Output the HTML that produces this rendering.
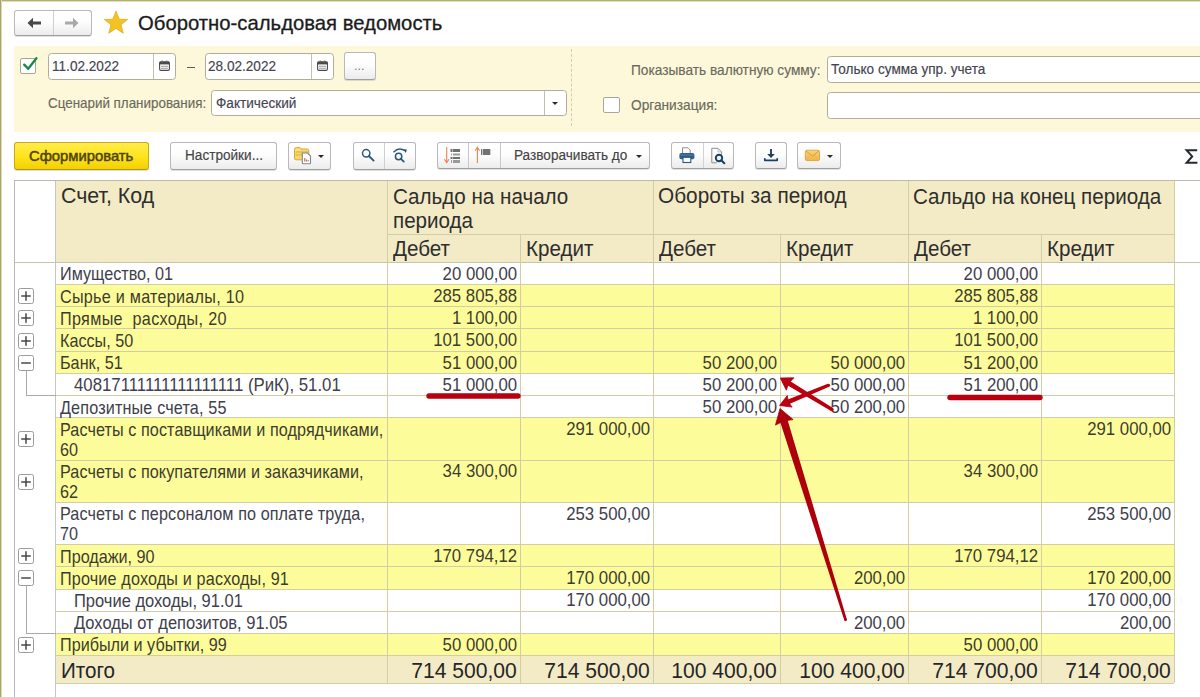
<!DOCTYPE html>
<html><head><meta charset="utf-8">
<style>
*{margin:0;padding:0;box-sizing:border-box}
html,body{width:1200px;height:697px;overflow:hidden;background:#fff}
body{position:relative;font-family:"Liberation Sans",sans-serif;color:#333}
.a{position:absolute}
.t{position:absolute;white-space:nowrap;line-height:1}
.btn{position:absolute;border:1px solid #b9b9b9;border-bottom-color:#9f9f9f;border-radius:3px;background:linear-gradient(#ffffff,#fdfdfd 45%,#ececec);box-shadow:0 1px 0 rgba(0,0,0,.12)}
.fld{position:absolute;background:#fff;border:1px solid #b1ad9c;border-radius:3.5px}
.vd{position:absolute;width:1px;background:#c4c4c4}
.tri{position:absolute;width:0;height:0;border-left:3px solid transparent;border-right:3px solid transparent;border-top:3px solid #2a2a2a}
</style></head><body>
<!-- window frame -->
<div class="a" style="left:0;top:0;width:1200px;height:1px;background:#b3ae74"></div><div class="a" style="left:0;top:1px;width:1200px;height:1px;background:#e2dfbd"></div>
<div class="a" style="left:0;top:0;width:1px;height:697px;background:#a9a46c"></div><div class="a" style="left:1px;top:0;width:1px;height:697px;background:#dcd9b4"></div>

<!-- nav buttons -->
<div class="btn" style="left:14px;top:10px;width:78px;height:26px"></div>
<div class="vd" style="left:53px;top:11px;height:24px;background:#cfcfcf"></div>
<svg class="a" style="left:26px;top:16px" width="16" height="14" viewBox="0 0 16 14"><path d="M1.5 7 L7 1.8 L7 5.4 L15 5.4 L15 8.6 L7 8.6 L7 12.2 Z" fill="#474747"/></svg>
<svg class="a" style="left:64px;top:16px" width="16" height="14" viewBox="0 0 16 14"><path d="M14.5 7 L9 1.8 L9 5.4 L1 5.4 L1 8.6 L9 8.6 L9 12.2 Z" fill="#a9a9a9"/></svg>

<!-- star -->
<svg class="a" style="left:103px;top:10px" width="26" height="25" viewBox="0 0 26 25"><path d="M13 1.2 L16.2 9.2 L24.6 9.5 L18 14.8 L20.3 23.2 L13 18.4 L5.7 23.2 L8 14.8 L1.4 9.5 L9.8 9.2 Z" fill="#f5c226" stroke="#e1ab18" stroke-width="0.8" stroke-linejoin="round"/></svg>
<div class="t" style="left:138px;top:13px;font-size:20.3px;color:#1b1b1b;-webkit-text-stroke:0.3px #1b1b1b">Оборотно-сальдовая ведомость</div>

<!-- yellow panel -->
<div class="a" style="left:14px;top:46px;width:1186px;height:86px;background:#fef8da"></div>


<!-- panel contents -->
<div class="a" style="left:20px;top:58px;width:16px;height:16px;border:1px solid #aaa59a;border-radius:2px;background:#fff"></div>
<svg class="a" style="left:20px;top:55px" width="20" height="18" viewBox="0 0 20 18"><path d="M4.2 9.6 L8.2 13.8 L16.4 3.2" fill="none" stroke="#168a46" stroke-width="2.3" stroke-linecap="round" stroke-linejoin="round"/></svg>

<div class="fld" style="left:48px;top:53px;width:128px;height:27px"></div>
<div class="vd" style="left:153px;top:54px;height:25px;background:#c4c0b0"></div>
<div class="t" style="left:52px;top:60px;font-size:13.6px;color:#444450;transform:scaleY(1.12);transform-origin:0 11.5px;-webkit-text-stroke:0.15px currentColor">11.02.2022</div>
<svg class="a" style="left:159px;top:60px" width="11" height="11" viewBox="0 0 11 11"><rect x="0.6" y="1.8" width="9.8" height="8.6" rx="1.3" fill="#fff" stroke="#4a4a4a" stroke-width="1.1"/><rect x="0.6" y="1.8" width="9.8" height="2.6" fill="#4a4a4a"/><path d="M2 6.3h7M2 8.3h7" stroke="#9a9a9a" stroke-width="1.1"/><path d="M3.2 0.6v2M7.8 0.6v2" stroke="#6a6a6a" stroke-width="1.2"/></svg>

<div class="a" style="left:187px;top:67px;width:8px;height:1px;background:#5a5a5a"></div>

<div class="fld" style="left:205px;top:53px;width:129px;height:27px"></div>
<div class="vd" style="left:311px;top:54px;height:25px;background:#c4c0b0"></div>
<div class="t" style="left:208px;top:60px;font-size:13.6px;color:#444450;transform:scaleY(1.12);transform-origin:0 11.5px;-webkit-text-stroke:0.15px currentColor">28.02.2022</div>
<svg class="a" style="left:317px;top:60px" width="11" height="11" viewBox="0 0 11 11"><rect x="0.6" y="1.8" width="9.8" height="8.6" rx="1.3" fill="#fff" stroke="#4a4a4a" stroke-width="1.1"/><rect x="0.6" y="1.8" width="9.8" height="2.6" fill="#4a4a4a"/><path d="M2 6.3h7M2 8.3h7" stroke="#9a9a9a" stroke-width="1.1"/><path d="M3.2 0.6v2M7.8 0.6v2" stroke="#6a6a6a" stroke-width="1.2"/></svg>

<div class="btn" style="left:344px;top:52px;width:32px;height:28px"></div>
<div class="t" style="left:354px;top:60px;font-size:12.5px;color:#777">...</div>

<div class="t" style="left:48px;top:97px;font-size:13.4px;color:#6a6a5c;transform:scaleY(1.12);transform-origin:0 11.3px;-webkit-text-stroke:0.15px currentColor">Сценарий планирования:</div>
<div class="fld" style="left:211px;top:90px;width:356px;height:26px"></div>
<div class="vd" style="left:544px;top:91px;height:24px;background:#c4c0b0"></div>
<div class="t" style="left:216px;top:97px;font-size:13.6px;color:#444450;transform:scaleY(1.12);transform-origin:0 11.5px;-webkit-text-stroke:0.15px currentColor">Фактический</div>
<div class="tri" style="left:552px;top:102px;"></div>

<div class="a" style="left:571px;top:49px;width:0;height:77px;border-left:1px dashed #d2ccb4"></div>

<div class="t" style="left:631px;top:64px;font-size:13.7px;color:#6a6a5c;transform:scaleY(1.12);transform-origin:0 11.6px;-webkit-text-stroke:0.15px currentColor">Показывать валютную сумму:</div>
<div class="fld" style="left:827px;top:56px;width:400px;height:27px"></div>
<div class="t" style="left:831px;top:63px;font-size:13.6px;color:#444450;transform:scaleY(1.12);transform-origin:0 11.5px;-webkit-text-stroke:0.15px currentColor">Только сумма упр. учета</div>

<div class="a" style="left:603px;top:97px;width:17px;height:16px;border:1px solid #aaa59a;border-radius:2px;background:#fff"></div>
<div class="t" style="left:631px;top:99px;font-size:13.7px;color:#6a6a5c;transform:scaleY(1.12);transform-origin:0 11.6px;-webkit-text-stroke:0.15px currentColor">Организация:</div>
<div class="fld" style="left:827px;top:92px;width:400px;height:27px"></div>

<!-- toolbar -->
<div class="a" style="left:14px;top:142px;width:135px;height:28px;border:1px solid #c8ab12;border-bottom-color:#b09510;border-radius:3px;background:linear-gradient(#ffec4d,#fde51f 50%,#f4d000);box-shadow:0 1px 0 rgba(0,0,0,.12)"></div>
<div class="t" style="left:29px;top:149px;font-size:14.8px;color:#4e4310;-webkit-text-stroke:0.5px #4e4310">Сформировать</div>

<div class="btn" style="left:170px;top:142px;width:107px;height:28px"></div>
<div class="t" style="left:185px;top:149px;font-size:13.6px;color:#444;transform:scaleY(1.12);transform-origin:0 11.5px;-webkit-text-stroke:0.15px currentColor">Настройки...</div>

<div class="btn" style="left:288px;top:142px;width:43px;height:28px"></div>
<svg class="a" style="left:293px;top:146px" width="20" height="20" viewBox="0 0 20 20">
<path d="M1.5 3.5 Q1.5 1.5 3.5 1.5 H6 Q7.5 1.5 8 3 H14.5 Q15.8 3 15.8 4.5 V12.5 Q15.8 13.8 14.5 13.8 H3 Q1.5 13.8 1.5 12.3 Z" fill="#f7d66a" stroke="#d6aa3a" stroke-width="1"/>
<path d="M2.5 6 H15 M2.5 9 H15" stroke="#e9bd4a" stroke-width="1.3"/>
<path d="M2.5 4.5 Q5 2.2 8 4.5" fill="none" stroke="#fbeab0" stroke-width="1"/>
<path d="M9.3 7 H14.5 L17.5 10 V17 Q17.5 17.8 16.7 17.8 H10.1 Q9.3 17.8 9.3 17 Z" fill="#fff" stroke="#7d8791" stroke-width="1.1"/>
<path d="M11.8 15.5 v-3.5 M13.6 15.5 v-2" stroke="#cf6a55" stroke-width="1.2"/><path d="M15.2 15.5 v-1.5" stroke="#8bb07a" stroke-width="1.2"/>
</svg>
<div class="tri" style="left:318px;top:155px;"></div>

<div class="btn" style="left:353px;top:142px;width:63px;height:28px"></div>
<div class="vd" style="left:384px;top:143px;height:26px;background:#cfcfcf"></div>
<svg class="a" style="left:359px;top:146px" width="18" height="18" viewBox="0 0 18 18"><circle cx="7.2" cy="7.3" r="3.7" fill="none" stroke="#2b587c" stroke-width="1.5"/><path d="M9.9 10 L14.6 14.6" stroke="#2b587c" stroke-width="1.9" stroke-linecap="round"/></svg>
<svg class="a" style="left:389px;top:145px" width="20" height="20" viewBox="0 0 20 20"><circle cx="9.6" cy="11.5" r="3.2" fill="none" stroke="#2b587c" stroke-width="1.5"/><path d="M11.9 13.8 L14.8 16.6" stroke="#2b587c" stroke-width="1.8" stroke-linecap="round"/><path d="M4.5 7.2 Q10 1.5 16 5.8" fill="none" stroke="#2b587c" stroke-width="1.4"/><path d="M14.2 4.2 L17.8 4.6 L16.8 8 Z" fill="#1d4d72"/></svg>

<div class="btn" style="left:437px;top:142px;width:213px;height:27px"></div>
<div class="vd" style="left:468px;top:143px;height:25px;background:#c8c8c8"></div>
<div class="vd" style="left:500px;top:143px;height:25px;background:#c8c8c8"></div>
<svg class="a" style="left:441px;top:145px" width="24" height="20" viewBox="0 0 24 20">
<path d="M5.7 2 V17" stroke="#ec8152" stroke-width="1.1"/><path d="M3.4 14.3 L5.7 17.8 L8 14.3" fill="none" stroke="#ec8152" stroke-width="1.1"/>
<g fill="#6f6f6f"><rect x="9.5" y="4" width="1.5" height="3"/><rect x="11.5" y="4" width="7.5" height="3"/><rect x="9.5" y="12" width="1.5" height="2"/><rect x="11.5" y="12" width="7.5" height="2"/></g>
<g fill="#9a9a9a"><rect x="10" y="8.5" width="1" height="2"/><rect x="12" y="8.5" width="7" height="2"/><rect x="10" y="15" width="1" height="3"/><rect x="12" y="15" width="7" height="3"/></g>
</svg>
<svg class="a" style="left:472px;top:145px" width="22" height="20" viewBox="0 0 22 20">
<path d="M5.4 3 V18" stroke="#ec8152" stroke-width="1.1"/><path d="M3.2 5.8 L5.4 2.2 L7.6 5.8" fill="none" stroke="#ec8152" stroke-width="1.1"/>
<g fill="#727272"><rect x="9" y="4" width="1.2" height="6"/><rect x="10.8" y="4" width="7.5" height="6"/></g>
</svg>
<div class="t" style="left:514px;top:149px;font-size:13.6px;color:#444;transform:scaleY(1.12);transform-origin:0 11.5px;-webkit-text-stroke:0.15px currentColor">Разворачивать до</div>
<div class="tri" style="left:636px;top:155px;"></div>

<div class="btn" style="left:671px;top:142px;width:63px;height:27px"></div>
<div class="vd" style="left:703px;top:143px;height:25px;background:#d2d2d2"></div>
<svg class="a" style="left:678px;top:147px" width="18" height="17" viewBox="0 0 18 17">
<path d="M4.5 0.8 h5.5 l2.2 2.2 v3.5 h-7.7 z" fill="#fff" stroke="#8a8f96" stroke-width="1"/>
<rect x="1.4" y="6" width="15" height="6.2" rx="1.8" fill="#32608c"/>
<path d="M2.5 8 H15.5" stroke="#5a86b0" stroke-width="0.9"/>
<rect x="5" y="10.3" width="7.8" height="5.2" fill="#fff" stroke="#2c5680" stroke-width="1.1"/>
</svg>
<svg class="a" style="left:709px;top:146px" width="18" height="19" viewBox="0 0 18 19">
<path d="M2.8 2.3 h6.2 l3.6 3.6 v3" fill="none" stroke="#8c8c8c" stroke-width="1"/><path d="M9 2.3 v3.6 h3.6" fill="none" stroke="#b5b5b5" stroke-width="0.8"/><path d="M2.8 2.3 v14.5 h5" fill="none" stroke="#8c8c8c" stroke-width="1"/>
<circle cx="10" cy="12" r="3.2" fill="#eaf6fb" stroke="#173f5f" stroke-width="1.9"/><path d="M12.3 14.3 L15.3 17.2" stroke="#173f5f" stroke-width="2.1" stroke-linecap="round"/>
</svg>

<div class="btn" style="left:755px;top:142px;width:32px;height:27px"></div>
<svg class="a" style="left:763px;top:148px" width="16" height="15" viewBox="0 0 16 15">
<path d="M8 1 V8.5" stroke="#1b4068" stroke-width="1.9"/><path d="M4.2 6 L8 10 L11.8 6 Z" fill="#1b4068"/>
<path d="M1.8 10.8 V12.3 H14.2 V10.8" fill="none" stroke="#1b4068" stroke-width="1.7" stroke-linecap="round" stroke-linejoin="round"/>
</svg>

<div class="btn" style="left:797px;top:142px;width:44px;height:27px"></div>
<svg class="a" style="left:804px;top:149px" width="17" height="13" viewBox="0 0 17 13">
<defs><linearGradient id="mg" x1="0" y1="0" x2="0" y2="1"><stop offset="0" stop-color="#f9d27a"/><stop offset="1" stop-color="#efb547"/></linearGradient></defs>
<rect x="1.3" y="1.2" width="14.2" height="10.4" rx="1.6" fill="url(#mg)" stroke="#dca23e" stroke-width="0.9"/>
<path d="M2 2 L8.4 7 L14.8 2" fill="none" stroke="#d5973a" stroke-width="0.9"/><path d="M2 11 L6.5 6.2 M14.8 11 L10.3 6.2" stroke="#e3ae52" stroke-width="0.7"/>
</svg>
<div class="tri" style="left:827px;top:155px;"></div>

<svg class="a" style="left:1184px;top:147px" width="16" height="19" viewBox="0 0 16 19"><path d="M13.2 3.2 H2.6 L8.2 9.4 L2.6 15.8 H13.4" fill="none" stroke="#262a2e" stroke-width="2" stroke-linejoin="miter"/></svg>


<!--TABLE-->
<div class="a" style="left:56px;top:181px;width:1118px;height:81px;background:#f3ebc6"></div>
<div class="a" style="left:56px;top:262px;width:1118px;height:22px;background:#ffffff"></div>
<div class="a" style="left:56px;top:284px;width:1118px;height:22px;background:#fdfc9a"></div>
<div class="a" style="left:56px;top:306px;width:1118px;height:22px;background:#fdfc9a"></div>
<div class="a" style="left:56px;top:328px;width:1118px;height:23px;background:#fdfc9a"></div>
<div class="a" style="left:56px;top:351px;width:1118px;height:22px;background:#fdfc9a"></div>
<div class="a" style="left:56px;top:373px;width:1118px;height:22px;background:#ffffff"></div>
<div class="a" style="left:56px;top:395px;width:1118px;height:22px;background:#ffffff"></div>
<div class="a" style="left:56px;top:417px;width:1118px;height:43px;background:#fdfc9a"></div>
<div class="a" style="left:56px;top:460px;width:1118px;height:42px;background:#fdfc9a"></div>
<div class="a" style="left:56px;top:502px;width:1118px;height:42px;background:#ffffff"></div>
<div class="a" style="left:56px;top:544px;width:1118px;height:22px;background:#fdfc9a"></div>
<div class="a" style="left:56px;top:566px;width:1118px;height:23px;background:#fdfc9a"></div>
<div class="a" style="left:56px;top:589px;width:1118px;height:22px;background:#ffffff"></div>
<div class="a" style="left:56px;top:611px;width:1118px;height:22px;background:#ffffff"></div>
<div class="a" style="left:56px;top:633px;width:1118px;height:22px;background:#fdfc9a"></div>
<div class="a" style="left:56px;top:655px;width:1118px;height:28px;background:#f3ebc6"></div>
<div class="a" style="left:55px;top:284px;width:1119px;height:1px;background:#d3cda6"></div>
<div class="a" style="left:55px;top:306px;width:1119px;height:1px;background:#d3cda6"></div>
<div class="a" style="left:55px;top:328px;width:1119px;height:1px;background:#d3cda6"></div>
<div class="a" style="left:55px;top:351px;width:1119px;height:1px;background:#d3cda6"></div>
<div class="a" style="left:55px;top:373px;width:1119px;height:1px;background:#d3cda6"></div>
<div class="a" style="left:55px;top:395px;width:1119px;height:1px;background:#d3cda6"></div>
<div class="a" style="left:55px;top:417px;width:1119px;height:1px;background:#d3cda6"></div>
<div class="a" style="left:55px;top:460px;width:1119px;height:1px;background:#d3cda6"></div>
<div class="a" style="left:55px;top:502px;width:1119px;height:1px;background:#d3cda6"></div>
<div class="a" style="left:55px;top:544px;width:1119px;height:1px;background:#d3cda6"></div>
<div class="a" style="left:55px;top:566px;width:1119px;height:1px;background:#d3cda6"></div>
<div class="a" style="left:55px;top:589px;width:1119px;height:1px;background:#d3cda6"></div>
<div class="a" style="left:55px;top:611px;width:1119px;height:1px;background:#d3cda6"></div>
<div class="a" style="left:55px;top:633px;width:1119px;height:1px;background:#d3cda6"></div>
<div class="a" style="left:55px;top:655px;width:1119px;height:1px;background:#d3cda6"></div>
<div class="a" style="left:55px;top:683px;width:1119px;height:1px;background:#d3cda6"></div>
<div class="a" style="left:14px;top:262px;width:1186px;height:1px;background:#c9c4ad"></div>
<div class="a" style="left:387px;top:234px;width:787px;height:1px;background:#d3cda6"></div>
<div class="a" style="left:14px;top:180px;width:1186px;height:1px;background:#bcb9ae"></div>
<div class="a" style="left:14px;top:180px;width:1px;height:517px;background:#b9b9b9"></div>
<div class="a" style="left:55px;top:181px;width:1px;height:516px;background:#c6c6c0"></div>
<div class="a" style="left:387px;top:181px;width:1px;height:502px;background:#d3cda6"></div>
<div class="a" style="left:520px;top:234px;width:1px;height:449px;background:#d3cda6"></div>
<div class="a" style="left:653px;top:181px;width:1px;height:502px;background:#d3cda6"></div>
<div class="a" style="left:780px;top:234px;width:1px;height:449px;background:#d3cda6"></div>
<div class="a" style="left:908px;top:181px;width:1px;height:502px;background:#d3cda6"></div>
<div class="a" style="left:1041px;top:234px;width:1px;height:449px;background:#d3cda6"></div>
<div class="a" style="left:1174px;top:181px;width:1px;height:502px;background:#d3cda6"></div>
<div class="t" style="left:61px;top:185.8px;font-size:21.4px;color:#2e2e2e;transform:scaleY(1.05);transform-origin:0 18.12px">Счет, Код</div>
<div class="t" style="left:393px;top:186.5px;font-size:20.6px;color:#2e2e2e;transform:scaleY(1.05);transform-origin:0 17.44px">Сальдо на начало</div>
<div class="t" style="left:393px;top:210.8px;font-size:20.6px;color:#2e2e2e;transform:scaleY(1.05);transform-origin:0 17.44px">периода</div>
<div class="t" style="left:658px;top:186.4px;font-size:20.8px;color:#2e2e2e;transform:scaleY(1.05);transform-origin:0 17.61px">Обороты за период</div>
<div class="t" style="left:913px;top:186.5px;font-size:20.6px;color:#2e2e2e;transform:scaleY(1.05);transform-origin:0 17.44px">Сальдо на конец периода</div>
<div class="t" style="left:393px;top:239.2px;font-size:20.6px;color:#2e2e2e;transform:scaleY(1.05);transform-origin:0 17.44px">Дебет</div>
<div class="t" style="left:526px;top:239.2px;font-size:20.6px;color:#2e2e2e;transform:scaleY(1.05);transform-origin:0 17.44px">Кредит</div>
<div class="t" style="left:659px;top:239.2px;font-size:20.6px;color:#2e2e2e;transform:scaleY(1.05);transform-origin:0 17.44px">Дебет</div>
<div class="t" style="left:786px;top:239.2px;font-size:20.6px;color:#2e2e2e;transform:scaleY(1.05);transform-origin:0 17.44px">Кредит</div>
<div class="t" style="left:914px;top:239.2px;font-size:20.6px;color:#2e2e2e;transform:scaleY(1.05);transform-origin:0 17.44px">Дебет</div>
<div class="t" style="left:1047px;top:239.2px;font-size:20.6px;color:#2e2e2e;transform:scaleY(1.05);transform-origin:0 17.44px">Кредит</div>
<div class="t" style="left:60px;top:265.6px;font-size:16.2px;color:#40404c;transform:scaleY(1.08);transform-origin:0 13.71px;letter-spacing:0px">Имущество, 01</div>
<div class="t" style="right:682.8px;top:266.7px;font-size:16.8px;color:#40404c;transform:scaleY(1.08);transform-origin:0 14.22px">20 000,00</div>
<div class="t" style="right:161.79999999999995px;top:266.7px;font-size:16.8px;color:#40404c;transform:scaleY(1.08);transform-origin:0 14.22px">20 000,00</div>
<div class="t" style="left:60px;top:288.8px;font-size:16.2px;color:#3d3d2e;transform:scaleY(1.08);transform-origin:0 13.71px;letter-spacing:0.25px">Сырье и материалы, 10</div>
<div class="t" style="right:682.8px;top:288.9px;font-size:16.8px;color:#3d3d2e;transform:scaleY(1.08);transform-origin:0 14.22px">285 805,88</div>
<div class="t" style="right:161.79999999999995px;top:288.9px;font-size:16.8px;color:#3d3d2e;transform:scaleY(1.08);transform-origin:0 14.22px">285 805,88</div>
<svg class="a" style="left:18px;top:288px" width="16" height="16" viewBox="0 0 16 16"><rect x="0.5" y="0.5" width="15" height="15" rx="1.8" fill="#fff" stroke="#9c9c9c"/><path d="M3.2 8 H12.8" stroke="#424242" stroke-width="1.45"/><path d="M8 3.2 V12.8" stroke="#424242" stroke-width="1.45"/></svg>
<div class="t" style="left:60px;top:311.0px;font-size:16.2px;color:#3d3d2e;transform:scaleY(1.08);transform-origin:0 13.71px;letter-spacing:0.32px">Прямые&nbsp; расходы, 20</div>
<div class="t" style="right:682.8px;top:311.1px;font-size:16.8px;color:#3d3d2e;transform:scaleY(1.08);transform-origin:0 14.22px">1 100,00</div>
<div class="t" style="right:161.79999999999995px;top:311.1px;font-size:16.8px;color:#3d3d2e;transform:scaleY(1.08);transform-origin:0 14.22px">1 100,00</div>
<svg class="a" style="left:18px;top:310px" width="16" height="16" viewBox="0 0 16 16"><rect x="0.5" y="0.5" width="15" height="15" rx="1.8" fill="#fff" stroke="#9c9c9c"/><path d="M3.2 8 H12.8" stroke="#424242" stroke-width="1.45"/><path d="M8 3.2 V12.8" stroke="#424242" stroke-width="1.45"/></svg>
<div class="t" style="left:60px;top:333.2px;font-size:16.2px;color:#3d3d2e;transform:scaleY(1.08);transform-origin:0 13.71px;letter-spacing:0px">Кассы, 50</div>
<div class="t" style="right:682.8px;top:333.3px;font-size:16.8px;color:#3d3d2e;transform:scaleY(1.08);transform-origin:0 14.22px">101 500,00</div>
<div class="t" style="right:161.79999999999995px;top:333.3px;font-size:16.8px;color:#3d3d2e;transform:scaleY(1.08);transform-origin:0 14.22px">101 500,00</div>
<svg class="a" style="left:18px;top:333px" width="16" height="16" viewBox="0 0 16 16"><rect x="0.5" y="0.5" width="15" height="15" rx="1.8" fill="#fff" stroke="#9c9c9c"/><path d="M3.2 8 H12.8" stroke="#424242" stroke-width="1.45"/><path d="M8 3.2 V12.8" stroke="#424242" stroke-width="1.45"/></svg>
<div class="t" style="left:60px;top:355.4px;font-size:16.2px;color:#3d3d2e;transform:scaleY(1.08);transform-origin:0 13.71px;letter-spacing:0px">Банк, 51</div>
<div class="t" style="right:682.8px;top:355.5px;font-size:16.8px;color:#3d3d2e;transform:scaleY(1.08);transform-origin:0 14.22px">51 000,00</div>
<div class="t" style="right:422.79999999999995px;top:355.5px;font-size:16.8px;color:#3d3d2e;transform:scaleY(1.08);transform-origin:0 14.22px">50 200,00</div>
<div class="t" style="right:294.79999999999995px;top:355.5px;font-size:16.8px;color:#3d3d2e;transform:scaleY(1.08);transform-origin:0 14.22px">50 000,00</div>
<div class="t" style="right:161.79999999999995px;top:355.5px;font-size:16.8px;color:#3d3d2e;transform:scaleY(1.08);transform-origin:0 14.22px">51 200,00</div>
<svg class="a" style="left:18px;top:355px" width="16" height="16" viewBox="0 0 16 16"><rect x="0.5" y="0.5" width="15" height="15" rx="1.8" fill="#fff" stroke="#9c9c9c"/><path d="M3.2 8 H12.8" stroke="#424242" stroke-width="1.45"/></svg>
<div class="t" style="left:74px;top:378.1px;font-size:16.8px;color:#40404c;transform:scaleY(1.08);transform-origin:0 14.22px;letter-spacing:0px">40817111111111111111 (РиК), 51.01</div>
<div class="t" style="right:682.8px;top:377.7px;font-size:16.8px;color:#40404c;transform:scaleY(1.08);transform-origin:0 14.22px">51 000,00</div>
<div class="t" style="right:422.79999999999995px;top:377.7px;font-size:16.8px;color:#40404c;transform:scaleY(1.08);transform-origin:0 14.22px">50 200,00</div>
<div class="t" style="right:294.79999999999995px;top:377.7px;font-size:16.8px;color:#40404c;transform:scaleY(1.08);transform-origin:0 14.22px">50 000,00</div>
<div class="t" style="right:161.79999999999995px;top:377.7px;font-size:16.8px;color:#40404c;transform:scaleY(1.08);transform-origin:0 14.22px">51 200,00</div>
<div class="t" style="left:60px;top:399.8px;font-size:16.2px;color:#40404c;transform:scaleY(1.08);transform-origin:0 13.71px;letter-spacing:0.15px">Депозитные счета, 55</div>
<div class="t" style="right:422.79999999999995px;top:399.9px;font-size:16.8px;color:#40404c;transform:scaleY(1.08);transform-origin:0 14.22px">50 200,00</div>
<div class="t" style="right:294.79999999999995px;top:399.9px;font-size:16.8px;color:#40404c;transform:scaleY(1.08);transform-origin:0 14.22px">50 200,00</div>
<div class="t" style="left:60px;top:422.0px;font-size:16.2px;color:#3d3d2e;transform:scaleY(1.08);transform-origin:0 13.71px;letter-spacing:0.08px">Расчеты с поставщиками и подрядчиками,</div>
<div class="t" style="left:60px;top:442.0px;font-size:16.2px;color:#3d3d2e;transform:scaleY(1.08);transform-origin:0 13.71px">60</div>
<div class="t" style="right:549.8px;top:422.1px;font-size:16.8px;color:#3d3d2e;transform:scaleY(1.08);transform-origin:0 14.22px">291 000,00</div>
<div class="t" style="right:28.799999999999955px;top:422.1px;font-size:16.8px;color:#3d3d2e;transform:scaleY(1.08);transform-origin:0 14.22px">291 000,00</div>
<svg class="a" style="left:18px;top:431px" width="16" height="16" viewBox="0 0 16 16"><rect x="0.5" y="0.5" width="15" height="15" rx="1.8" fill="#fff" stroke="#9c9c9c"/><path d="M3.2 8 H12.8" stroke="#424242" stroke-width="1.45"/><path d="M8 3.2 V12.8" stroke="#424242" stroke-width="1.45"/></svg>
<div class="t" style="left:60px;top:464.3px;font-size:16.2px;color:#3d3d2e;transform:scaleY(1.08);transform-origin:0 13.71px;letter-spacing:0.07px">Расчеты с покупателями и заказчиками,</div>
<div class="t" style="left:60px;top:484.3px;font-size:16.2px;color:#3d3d2e;transform:scaleY(1.08);transform-origin:0 13.71px">62</div>
<div class="t" style="right:682.8px;top:464.4px;font-size:16.8px;color:#3d3d2e;transform:scaleY(1.08);transform-origin:0 14.22px">34 300,00</div>
<div class="t" style="right:161.79999999999995px;top:464.4px;font-size:16.8px;color:#3d3d2e;transform:scaleY(1.08);transform-origin:0 14.22px">34 300,00</div>
<svg class="a" style="left:18px;top:474px" width="16" height="16" viewBox="0 0 16 16"><rect x="0.5" y="0.5" width="15" height="15" rx="1.8" fill="#fff" stroke="#9c9c9c"/><path d="M3.2 8 H12.8" stroke="#424242" stroke-width="1.45"/><path d="M8 3.2 V12.8" stroke="#424242" stroke-width="1.45"/></svg>
<div class="t" style="left:60px;top:505.6px;font-size:16.2px;color:#40404c;transform:scaleY(1.08);transform-origin:0 13.71px;letter-spacing:0.08px">Расчеты с персоналом по оплате труда,</div>
<div class="t" style="left:60px;top:525.6px;font-size:16.2px;color:#40404c;transform:scaleY(1.08);transform-origin:0 13.71px">70</div>
<div class="t" style="right:549.8px;top:506.7px;font-size:16.8px;color:#40404c;transform:scaleY(1.08);transform-origin:0 14.22px">253 500,00</div>
<div class="t" style="right:28.799999999999955px;top:506.7px;font-size:16.8px;color:#40404c;transform:scaleY(1.08);transform-origin:0 14.22px">253 500,00</div>
<div class="t" style="left:60px;top:548.9px;font-size:16.2px;color:#3d3d2e;transform:scaleY(1.08);transform-origin:0 13.71px;letter-spacing:0px">Продажи, 90</div>
<div class="t" style="right:682.8px;top:549.0px;font-size:16.8px;color:#3d3d2e;transform:scaleY(1.08);transform-origin:0 14.22px">170 794,12</div>
<div class="t" style="right:161.79999999999995px;top:549.0px;font-size:16.8px;color:#3d3d2e;transform:scaleY(1.08);transform-origin:0 14.22px">170 794,12</div>
<svg class="a" style="left:18px;top:548px" width="16" height="16" viewBox="0 0 16 16"><rect x="0.5" y="0.5" width="15" height="15" rx="1.8" fill="#fff" stroke="#9c9c9c"/><path d="M3.2 8 H12.8" stroke="#424242" stroke-width="1.45"/><path d="M8 3.2 V12.8" stroke="#424242" stroke-width="1.45"/></svg>
<div class="t" style="left:60px;top:571.1px;font-size:16.2px;color:#3d3d2e;transform:scaleY(1.08);transform-origin:0 13.71px;letter-spacing:0.15px">Прочие доходы и расходы, 91</div>
<div class="t" style="right:549.8px;top:571.2px;font-size:16.8px;color:#3d3d2e;transform:scaleY(1.08);transform-origin:0 14.22px">170 000,00</div>
<div class="t" style="right:294.79999999999995px;top:571.2px;font-size:16.8px;color:#3d3d2e;transform:scaleY(1.08);transform-origin:0 14.22px">200,00</div>
<div class="t" style="right:28.799999999999955px;top:571.2px;font-size:16.8px;color:#3d3d2e;transform:scaleY(1.08);transform-origin:0 14.22px">170 200,00</div>
<svg class="a" style="left:18px;top:570px" width="16" height="16" viewBox="0 0 16 16"><rect x="0.5" y="0.5" width="15" height="15" rx="1.8" fill="#fff" stroke="#9c9c9c"/><path d="M3.2 8 H12.8" stroke="#424242" stroke-width="1.45"/></svg>
<div class="t" style="left:74px;top:593.1px;font-size:16.5px;color:#40404c;transform:scaleY(1.08);transform-origin:0 13.97px;letter-spacing:0px">Прочие доходы, 91.01</div>
<div class="t" style="right:549.8px;top:593.4px;font-size:16.8px;color:#40404c;transform:scaleY(1.08);transform-origin:0 14.22px">170 000,00</div>
<div class="t" style="right:28.799999999999955px;top:593.4px;font-size:16.8px;color:#40404c;transform:scaleY(1.08);transform-origin:0 14.22px">170 000,00</div>
<div class="t" style="left:74px;top:615.3px;font-size:16.5px;color:#40404c;transform:scaleY(1.08);transform-origin:0 13.97px;letter-spacing:0px">Доходы от депозитов, 91.05</div>
<div class="t" style="right:294.79999999999995px;top:615.6px;font-size:16.8px;color:#40404c;transform:scaleY(1.08);transform-origin:0 14.22px">200,00</div>
<div class="t" style="right:28.799999999999955px;top:615.6px;font-size:16.8px;color:#40404c;transform:scaleY(1.08);transform-origin:0 14.22px">200,00</div>
<div class="t" style="left:60px;top:636.7px;font-size:16.2px;color:#3d3d2e;transform:scaleY(1.08);transform-origin:0 13.71px;letter-spacing:0px">Прибыли и убытки, 99</div>
<div class="t" style="right:682.8px;top:637.8px;font-size:16.8px;color:#3d3d2e;transform:scaleY(1.08);transform-origin:0 14.22px">50 000,00</div>
<div class="t" style="right:161.79999999999995px;top:637.8px;font-size:16.8px;color:#3d3d2e;transform:scaleY(1.08);transform-origin:0 14.22px">50 000,00</div>
<svg class="a" style="left:18px;top:637px" width="16" height="16" viewBox="0 0 16 16"><rect x="0.5" y="0.5" width="15" height="15" rx="1.8" fill="#fff" stroke="#9c9c9c"/><path d="M3.2 8 H12.8" stroke="#424242" stroke-width="1.45"/><path d="M8 3.2 V12.8" stroke="#424242" stroke-width="1.45"/></svg>
<div class="a" style="left:26px;top:371px;width:1px;height:24px;background:#a9a9a9"></div>
<div class="a" style="left:26px;top:395px;width:30px;height:1px;background:#a9a9a9"></div>
<div class="a" style="left:26px;top:586px;width:1px;height:47px;background:#a9a9a9"></div>
<div class="a" style="left:26px;top:633px;width:30px;height:1px;background:#a9a9a9"></div>
<div class="t" style="left:61px;top:660.7px;font-size:20.6px;color:#262626;transform:scaleY(1.09);transform-origin:0 17.4px">Итого</div>
<div class="t" style="right:683.2px;top:660.7px;font-size:21.1px;color:#262626;transform:scaleY(1.065);transform-origin:0 17.86px;margin-top:-0.4px">714 500,00</div>
<div class="t" style="right:550.2px;top:660.7px;font-size:21.1px;color:#262626;transform:scaleY(1.065);transform-origin:0 17.86px;margin-top:-0.4px">714 500,00</div>
<div class="t" style="right:423.20000000000005px;top:660.7px;font-size:21.1px;color:#262626;transform:scaleY(1.065);transform-origin:0 17.86px;margin-top:-0.4px">100 400,00</div>
<div class="t" style="right:295.20000000000005px;top:660.7px;font-size:21.1px;color:#262626;transform:scaleY(1.065);transform-origin:0 17.86px;margin-top:-0.4px">100 400,00</div>
<div class="t" style="right:162.20000000000005px;top:660.7px;font-size:21.1px;color:#262626;transform:scaleY(1.065);transform-origin:0 17.86px;margin-top:-0.4px">714 700,00</div>
<div class="t" style="right:29.200000000000045px;top:660.7px;font-size:21.1px;color:#262626;transform:scaleY(1.065);transform-origin:0 17.86px;margin-top:-0.4px">714 700,00</div>
<!--/TABLE-->
<!--ARROWS-->
<svg class="a" style="left:0;top:0" width="1200" height="697" viewBox="0 0 1200 697">
<line x1="429" y1="396" x2="518" y2="396" stroke="#b8000e" stroke-width="5.4" stroke-linecap="round"/>
<line x1="950" y1="397.5" x2="1040" y2="397.5" stroke="#b8000e" stroke-width="5.4" stroke-linecap="round"/>
<polygon points="832.9,408.0 787.5,379.4 784.8,383.8 831.1,411.0" fill="#b8000e"/><polygon points="780.3,378.0 793.9,377.8 788.8,383.2 786.3,390.2" fill="#b8000e" stroke="#b8000e" stroke-width="0.8" stroke-linejoin="round"/><circle cx="832.0" cy="409.5" r="1.7" fill="#b8000e"/>
<polygon points="827.9,383.8 784.7,400.8 786.5,405.2 829.1,386.8" fill="#b8000e"/><polygon points="779.5,405.5 787.3,395.5 788.3,401.9 792.1,407.1" fill="#b8000e" stroke="#b8000e" stroke-width="0.8" stroke-linejoin="round"/><circle cx="828.5" cy="385.3" r="1.6" fill="#b8000e"/>
<polygon points="846.9,619.4 786.3,415.7 778.9,418.0 844.3,620.2" fill="#ad000c"/><polygon points="780.0,408.5 793.1,419.6 783.9,420.9 775.5,425.1" fill="#ad000c" stroke="#ad000c" stroke-width="0.8" stroke-linejoin="round"/><circle cx="845.6" cy="619.8" r="1.4" fill="#ad000c"/>
</svg>
<!--/ARROWS-->
</body></html>
